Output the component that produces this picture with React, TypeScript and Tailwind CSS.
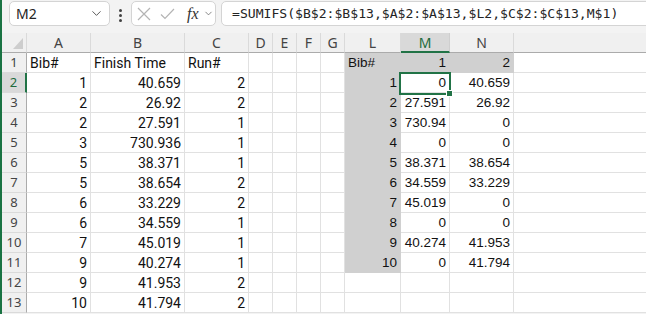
import { ChevronDown } from 'lucide-react'

const cols = ['A', 'B', 'C', 'D', 'E', 'F', 'G', 'L', 'M', 'N']

type Cell = string | number | null

// A..C data, then L..N data (rows 1-13)
const left: Cell[][] = [
  ['Bib#', 'Finish Time', 'Run#'],
  [1, 40.659, 2],
  [2, 26.92, 2],
  [2, 27.591, 1],
  [3, 730.936, 1],
  [5, 38.371, 1],
  [5, 38.654, 2],
  [6, 33.229, 2],
  [6, 34.559, 1],
  [7, 45.019, 1],
  [9, 40.274, 1],
  [9, 41.953, 2],
  [10, 41.794, 2],
]

const right: Cell[][] = [
  ['Bib#', 1, 2],
  [1, 0, 40.659],
  [2, 27.591, 26.92],
  [3, 730.94, 0],
  [4, 0, 0],
  [5, 38.371, 38.654],
  [6, 34.559, 33.229],
  [7, 45.019, 0],
  [8, 0, 0],
  [9, 40.274, 41.953],
  [10, 0, 41.794],
  [null, null, null],
  [null, null, null],
]

const hdrFont = "[font-family:'Noto_Sans','Open_Sans',sans-serif]"

const DataCell = ({ v, narrow, fill, selected }: { v: Cell; narrow?: boolean; fill?: boolean; selected?: boolean }) => {
  const isNum = typeof v === 'number'
  return (
    <div
      className={`relative h-[20px] border-r border-b flex items-end pb-[1px] px-[3px] overflow-visible whitespace-nowrap text-[#111] ${
        isNum ? 'justify-end' : 'justify-start'
      } ${fill ? 'bg-[#d0d0d0] border-[#d0d0d0]' : 'bg-white border-[#e1e1e1]'} ${
        narrow
          ? "text-[14px] [font-family:'Roboto','Liberation_Sans',sans-serif]"
          : "text-[13.5px] [font-family:'Liberation_Sans',Arial,sans-serif]"
      } ${selected ? 'z-10' : ''}`}
    >
      {v !== null && <span className="leading-[16px]">{v}</span>}
      {selected && (
        <>
          <div className="absolute -left-[2px] -top-[1px] w-[52px] h-[23px] border-2 border-[#217346]" />
          <div className="absolute left-[45px] top-[17px] w-[7px] h-[7px] bg-[#217346] border border-white" />
        </>
      )}
    </div>
  )
}

export default function App() {
  return (
    <div className="w-[646px] h-[314px] overflow-hidden bg-[#f3f3f3] flex">
      <div className="w-[2px] shrink-0 bg-[#1a7343]" />
      <div className="flex-1 flex flex-col min-w-0">
        {/* formula bar */}
        <div className="h-[33px] shrink-0 flex items-start pt-[1px]">
          <div className="ml-[7px] w-[101px] h-[25px] rounded-[5px] border border-[#d4d4d4] bg-white flex items-center justify-between pl-[6px] pr-[5px]">
            <span className={`text-[14px] text-[#242424] ${hdrFont}`}>M2</span>
            <ChevronDown size={15} strokeWidth={1.4} className="text-[#424242]" />
          </div>
          <div className="ml-[9px] mt-[8px] flex flex-col gap-[2px]">
            <div className="w-[3px] h-[3px] rounded-full bg-[#424242]" />
            <div className="w-[3px] h-[3px] rounded-full bg-[#424242]" />
            <div className="w-[3px] h-[3px] rounded-full bg-[#424242]" />
          </div>
          <div className="ml-[9px] w-[85px] h-[25px] rounded-[5px] border border-[#d4d4d4] bg-white flex items-center pl-[4px]">
            <svg width="14" height="14" viewBox="0 0 14 14" className="ml-[1px]">
              <path d="M1 1 L13 13 M13 1 L1 13" stroke="#b4b4b4" strokeWidth="1.2" fill="none" />
            </svg>
            <svg width="15" height="12" viewBox="0 0 15 12" className="ml-[9px]">
              <path d="M1 6.5 L5 10.5 L14 1" stroke="#b4b4b4" strokeWidth="1.2" fill="none" />
            </svg>
            <span className="ml-[12px] text-[16px] italic text-[#333] leading-none [font-family:'Liberation_Serif',serif]">
              fx
            </span>
            <ChevronDown size={11} strokeWidth={1.5} className="ml-[4px] text-[#555]" />
          </div>
          <div className="ml-[5px] -mr-[10px] flex-1 h-[25px] rounded-[5px] border border-[#d4d4d4] bg-white flex items-center pl-[10px] overflow-hidden whitespace-nowrap">
            <span className="text-[13.1px] text-[#242424] [font-family:'DejaVu_Sans_Mono','Liberation_Mono',monospace]">
              =SUMIFS($B$2:$B$13,$A$2:$A$13,$L2,$C$2:$C$13,M$1)
            </span>
          </div>
        </div>

        {/* sheet */}
        <div className="grid grid-cols-[25px_64px_94px_64px_24px_24px_24px_24px_56px_49px_64px_1fr] auto-rows-[20px] bg-white">
          {/* column headers */}
          <div className="bg-[#f0f0f0] border-r border-r-[#dadada] border-b border-b-[#ababab] flex items-end justify-end pr-[3px] pb-[3px]">
            <svg width="10" height="11" viewBox="0 0 10 11">
              <path d="M10 0 L10 11 L0 11 Z" fill="#cdcdcd" />
            </svg>
          </div>
          {cols.map((c) => (
            <div
              key={c}
              className={`flex items-center justify-center text-[14px] ${hdrFont} border-r ${
                c === 'M'
                  ? 'bg-[#d9d9d9] text-[#1e6b3c] border-r-[#cfcfcf] border-b-2 border-b-[#217346]'
                  : 'bg-[#f0f0f0] text-[#444] border-r-[#dadada] border-b border-b-[#ababab]'
              }`}
            >
              {c}
            </div>
          ))}
          <div className="bg-[#f0f0f0] border-b border-b-[#ababab]" />

          {/* rows */}
          {Array.from({ length: 13 }).map((_, r) => {
            const row = r + 1
            const sel = row === 2
            const lv = left[r]
            const rv = right[r]
            return [
              <div
                key={`h${row}`}
                className={`flex items-center justify-center text-[13px] ${hdrFont} border-b border-b-[#dadada] ${
                  sel
                    ? 'bg-[#d9d9d9] text-[#1e6b3c] border-r-2 border-r-[#217346]'
                    : 'bg-[#f0f0f0] text-[#444] border-r border-r-[#ababab]'
                }`}
              >
                {row}
              </div>,
              <DataCell key={`a${row}`} v={lv[0]} narrow />,
              <DataCell key={`b${row}`} v={lv[1]} narrow />,
              <DataCell key={`c${row}`} v={lv[2]} narrow />,
              <DataCell key={`d${row}`} v={null} />,
              <DataCell key={`e${row}`} v={null} />,
              <DataCell key={`f${row}`} v={null} />,
              <DataCell key={`g${row}`} v={null} />,
              <DataCell key={`l${row}`} v={rv[0]} fill={row <= 11} />,
              <DataCell key={`m${row}`} v={rv[1]} fill={row === 1} selected={row === 2} />,
              <DataCell key={`n${row}`} v={rv[2]} fill={row === 1} />,
              <div key={`o${row}`} className="h-[20px] border-b border-[#e1e1e1] bg-white" />,
            ]
          })}
        </div>
      </div>
    </div>
  )
}
